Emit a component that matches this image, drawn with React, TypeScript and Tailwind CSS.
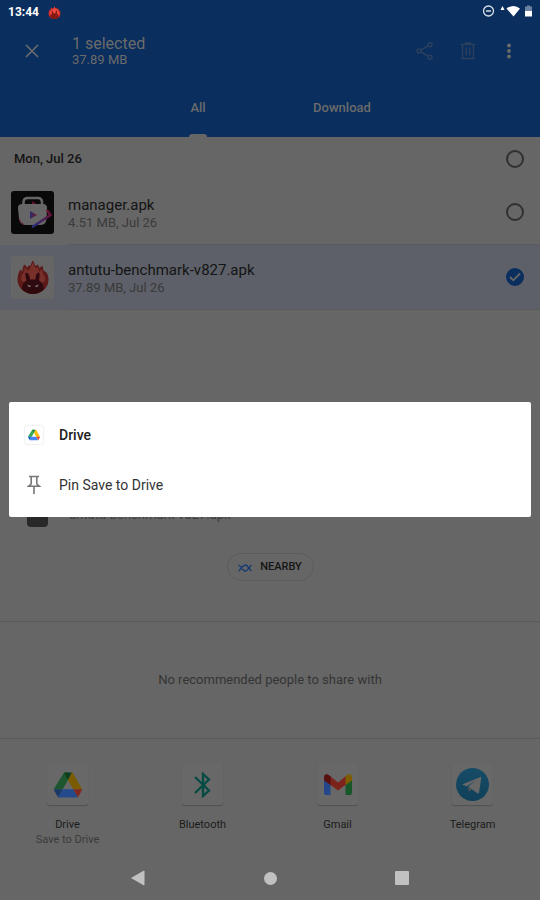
import type { ReactNode } from "react";

function AntutuIcon({ size, bright = false }: { size: number; bright?: boolean }) {
  const flame = bright ? "#d92d27" : "#5c1a19";
  const flameLight = bright ? "#ee4a40" : "#78302a";
  const face = bright ? "#7d1713" : "#2e090d";
  return (
    <svg width={size} height={size} viewBox="0 0 32 34" aria-hidden="true">
      <path
        d="M16 34C7 34 .5 27.500.5 19.500 .5 15.500 1.500 12.500 3.500 9.500L5.500 11.500C5.500 8.500 6 6 7.500 4.500L10.500 7.500 12 5 13.500 6.500C13.800 4 14.500 2 16 .5L18.500 6 21 4.500 22.500 8 25.500 5.500 26.500 10.500 29.500 12.500C31 15 31.500 17 31.500 19.500 31.500 27.500 25 34 16 34Z"
        fill={flame}
      />
      <path
        d="M4 20C4 16 5.500 14 7 12L8 7 11 11 13.500 8 16 2.500 18.500 8.500 20.500 7 22.500 12 25 9 26 14C28 16 28.500 18 28 21L22 25H10Z"
        fill={flameLight}
      />
      <path
        d="M8.500 13C10.500 11.800 12.500 14 13 19.500H18.500C18.500 14 20.500 11.800 22.500 13 23 15.500 22.200 18 22 20.500 25 22 26.500 25 27 29 24 32.500 20 34 16 34 12 34 8 32.500 5 29 5 25 6.500 22 9.500 20.500 9.200 18 8 15.500 8.500 13Z"
        fill={face}
      />
      <path d="M10 24.500L14.500 26 12 27.200ZM22 24.500L17.500 26 20 27.200Z" fill={bright ? "#e0342d" : "#777"} />
    </svg>
  );
}

function ManagerIcon() {
  return (
    <svg width="43" height="43" viewBox="0 0 43 43" aria-hidden="true">
      <defs>
        <linearGradient id="ribbon" x1="0" y1="1" x2="1" y2="0">
          <stop offset="0" stopColor="#26317c" />
          <stop offset="0.5" stopColor="#4c1f58" />
          <stop offset="1" stopColor="#72102f" />
        </linearGradient>
        <linearGradient id="play" x1="0" y1="0" x2="1" y2="0">
          <stop offset="0" stopColor="#292e70" />
          <stop offset="1" stopColor="#75152c" />
        </linearGradient>
      </defs>
      <rect width="43" height="43" rx="3" fill="#090909" />
      <path d="M21 10L27 14H21Z" fill="#651229" />
      <path d="M12.500 15V10.500Q13 7 16.500 7H27Q30.500 7 31 10.500V15" fill="none" stroke="#666" strokeWidth="2.500" />
      <path d="M11 13H32Q36 13 36 17L35.500 28Q35 34 29 34H15Q9 34 8 28L7 17Q7 13 11 13Z" fill="#666" />
      <path d="M8 28Q9.500 33 13 33.500" fill="none" stroke="#66152f" />
      <path d="M19 20L26 24 19 28Z" fill="url(#play)" />
      <path d="M36.500 20L39.500 24 22 35.500" fill="none" stroke="url(#ribbon)" strokeWidth="2.500" strokeLinejoin="round" strokeLinecap="round" />
    </svg>
  );
}

function DriveIcon({ size, bright = false }: { size: number; bright?: boolean }) {
  const c = bright
    ? ["#34a853", "#188038", "#fbbc04", "#4285f4", "#1967d2", "#ea4335"]
    : ["#1d5730", "#0c3f1c", "#7b5b00", "#234a8c", "#183967", "#812820"];
  return (
    <svg width={size} height={size} viewBox="0 0 28 26" aria-hidden="true">
      <path d="M9.500 1.500Q10 .5 11 .5H14L14 8 8.700 17.300H0Q0 16.500.5 15.800Z" fill={c[0]} />
      <path d="M10 .5H18L14 8Z" fill={c[1]} />
      <path d="M18 .5Q18.600.5 19 1.200L28 17.300H19.300L14 8Z" fill={c[2]} />
      <path d="M8.700 17.300H19.300L23.800 25Q23.500 25.500 22.500 25.500H5.500Q4.500 25.500 4.200 25Z" fill={c[3]} />
      <path d="M0 17.300H8.700L4.200 25Q3.800 25 3.500 24.300L.4 19Q0 18.300 0 17.300Z" fill={c[4]} />
      <path d="M19.300 17.300H28Q28 18.300 27.600 19L24.500 24.300Q24.200 25 23.800 25Z" fill={c[5]} />
    </svg>
  );
}

function BluetoothIcon() {
  return (
    <svg width="18" height="26" viewBox="0 0 18 26" fill="none" stroke="#064b43" strokeWidth="2.300" aria-hidden="true">
      <path d="M1 5L15 18.500 9 24V2L15 7.500 1 21" />
    </svg>
  );
}

function GmailIcon() {
  return (
    <svg width="28" height="21" viewBox="0 0 28 21" aria-hidden="true">
      <path d="M0 5H6.500V21H2Q0 21 0 19Z" fill="#24468a" />
      <path d="M21.500 5H28V19Q28 21 26 21H21.500Z" fill="#175729" />
      <path d="M6 2L14 8.500 22 2V10.500L14 16.500 6 10.500Z" fill="#7c231c" />
      <path d="M0 3Q0 1 2 .3 3.500 0 5 1L6.500 2.500V11L0 6.500Z" fill="#57100e" />
      <path d="M28 3Q28 1 26 .3 24.500 0 23 1L21.500 2.500V11L28 6.500Z" fill="#7e5c00" />
    </svg>
  );
}

function TelegramIcon() {
  return (
    <svg width="33" height="33" viewBox="0 0 33 33" aria-hidden="true">
      <defs>
        <linearGradient id="telegram" x1="0" y1="0" x2="0" y2="1">
          <stop offset="0" stopColor="#174c66" />
          <stop offset="1" stopColor="#10405a" />
        </linearGradient>
      </defs>
      <circle cx="16.500" cy="16.500" r="16.500" fill="url(#telegram)" />
      <path d="M6 16.500L24.500 9Q25.700 8.700 25.300 10L23 24.500Q22.500 26 21 25L12 18.500 21 12 10.500 18.300Z" fill="#686868" />
      <path d="M12 18.500L13 23.500 16 21.300Z" fill="#555" />
    </svg>
  );
}

function StatusBar() {
  return (
    <div className="flex h-6 items-center px-2 text-white">
      <span className="text-xs font-bold leading-4">13:44</span>
      <span className="ml-2 flex w-4 justify-center">
        <AntutuIcon size={13} bright />
      </span>
      <span className="ml-auto flex items-center">
        <svg width="52" height="14" viewBox="0 0 52 14" aria-label="Do not disturb, Wi-Fi, battery" role="img">
          <circle cx="8.500" cy="6" r="5" fill="none" stroke="#d9dfe8" strokeWidth="1.300" />
          <path d="M6 6H11" stroke="#d9dfe8" strokeWidth="1.500" />
          <path d="M20.500 5L22.500 1 24.500 5Z" fill="#fff" />
          <path d="M26.500 3.500Q33.500-1.500 40 3.500L33.500 11.500Z" fill="#fff" />
          <path d="M45 1.500H47V.5H50V1.500H52V6H45Z" fill="#6c82a0" />
          <path d="M45 6H52V11.500H45Z" fill="#fff" />
        </svg>
      </span>
    </div>
  );
}

function Header() {
  return (
    <header className="bg-[#0a2e5d] text-[#6b6b6b]">
      <StatusBar />
      <div className="flex h-[54px] items-center">
        <button aria-label="Close selection" className="flex w-16 justify-center">
          <svg width="14" height="14" viewBox="0 0 14 14" stroke="currentColor" strokeWidth="1.600" aria-hidden="true">
            <path d="M1 1L13 13M13 1L1 13" />
          </svg>
        </button>
        <div className="flex-1 pl-2 pt-0.5">
          <h1 className="text-base leading-4">1 selected</h1>
          <p className="text-[13px] leading-4">37.89 MB</p>
        </div>
        <button aria-label="Share" className="flex w-[43px] justify-center text-[#2b405d]">
          <svg width="18" height="18" viewBox="0 0 18 18" fill="none" stroke="currentColor" strokeWidth="1.500" aria-hidden="true">
            <circle cx="3" cy="9" r="2" />
            <circle cx="14" cy="2.800" r="2" />
            <circle cx="14" cy="15.200" r="2" />
            <path d="M4.800 8L12.200 3.800M4.800 10L12.200 14.200" />
          </svg>
        </button>
        <button aria-label="Delete" className="flex w-[43px] justify-center text-[#2b405d]">
          <svg width="16" height="18" viewBox="0 0 16 18" fill="none" stroke="currentColor" strokeWidth="1.500" aria-hidden="true">
            <path d="M1 2.500H15M5.500 2V1H10.500V2M2.500 2.500V16.500H13.500V2.500M6.200 5.500V13.500M9.800 5.500V13.500" />
          </svg>
        </button>
        <button aria-label="More options" className="mr-[11px] flex w-10 justify-center">
          <svg width="4" height="16" viewBox="0 0 4 16" fill="currentColor" aria-hidden="true">
            <circle cx="2" cy="2.500" r="1.900" />
            <circle cx="2" cy="8" r="1.900" />
            <circle cx="2" cy="13.500" r="1.900" />
          </svg>
        </button>
      </div>
      <nav className="flex h-[59px] justify-center text-[13px] font-medium">
        <button className="flex w-36 flex-col items-center justify-between">
          <span className="pt-5 leading-5">All</span>
          <span className="h-[3px] w-[18px] rounded-t-sm bg-[#666]" />
        </button>
        <button className="flex w-36 flex-col items-center">
          <span className="pt-5 leading-5">Download</span>
        </button>
      </nav>
    </header>
  );
}

function Tick({ label, checked = false }: { label: string; checked?: boolean }) {
  return (
    <label className="mr-4 grid place-items-center">
      <input
        type="checkbox"
        aria-label={label}
        defaultChecked={checked}
        className="peer col-start-1 row-start-1 size-[18px] appearance-none rounded-full border-2 border-[#303030] checked:border-[#0a2e5d] checked:bg-[#0a2e5d]"
      />
      <svg
        width="12"
        height="10"
        viewBox="0 0 12 10"
        fill="none"
        stroke="#666"
        strokeWidth="1.800"
        aria-hidden="true"
        className="pointer-events-none invisible col-start-1 row-start-1 peer-checked:visible"
      >
        <path d="M1 5L4.300 8.300 11 1.500" />
      </svg>
    </label>
  );
}

function FileRow({ icon, name, detail, selected = false }: { icon: ReactNode; name: string; detail: string; selected?: boolean }) {
  return (
    <li className={selected ? "bg-[#5d6068]" : ""}>
      <div className="flex h-16 items-center">
        <span className="ml-[11px] flex w-[57px]">{icon}</span>
        <div className="flex-1 pt-0.5">
          <p className="text-[15px] leading-5 text-[#141414]">{name}</p>
          <p className="text-[13px] leading-4 text-[#3a3a3a]">{detail}</p>
        </div>
        <Tick label={name} checked={selected} />
      </div>
      <div className="ml-[68px] h-px bg-[#5b5b5d]" />
    </li>
  );
}

function ShareTarget({ icon, name, detail }: { icon: ReactNode; name: string; detail?: string }) {
  return (
    <button className="flex flex-col items-center text-[11px]">
      <span className="flex size-[41px] items-center justify-center rounded-[3px] bg-[#686868] shadow-[0_1px_1px_#505050]">{icon}</span>
      <span className="mt-3 leading-4 text-[#1b1b1b]">{name}</span>
      {detail && <span className="leading-[14px] text-[#3b3b3b]">{detail}</span>}
    </button>
  );
}

function ShareSheet() {
  return (
    <section aria-label="Share" className="pt-[195px]">
      <div className="flex h-[22px] items-end">
        <span className="ml-[27px] h-[22px] w-[21px] rounded-sm bg-[#282828]" />
        <span className="ml-[21px] self-start text-[13px] leading-5 text-[#3f3f3f]">antutu-benchmark-v827.apk</span>
      </div>
      <div className="flex h-[94px] justify-center pt-[26px]">
        <button className="flex h-7 w-[87px] items-center justify-center gap-2 rounded-full border border-[#5c5c5c] pt-px text-[11px] font-medium text-[#151515]">
          <svg width="14" height="8" viewBox="0 0 14 8" fill="none" stroke="#183d73" strokeWidth="1.500" aria-hidden="true">
            <path d="M.5 1L3 3M.5 7C3 5.500 4.500 1 7.500 1 9.500 1 11 4.500 13.500 7M4 5C5 6 6 7 7.500 7 9.500 7 11 3.500 13.500 1" />
          </svg>
          NEARBY
        </button>
      </div>
      <p className="flex h-[118px] items-center justify-center border-y border-[#5a5a5a] text-[13px] text-[#343434]">
        No recommended people to share with
      </p>
      <div className="grid grid-cols-4 items-start pt-[25px]">
        <ShareTarget icon={<DriveIcon size={28} />} name="Drive" detail="Save to Drive" />
        <ShareTarget icon={<BluetoothIcon />} name="Bluetooth" />
        <ShareTarget icon={<GmailIcon />} name="Gmail" />
        <ShareTarget icon={<TelegramIcon />} name="Telegram" />
      </div>
    </section>
  );
}

function NavigationBar() {
  return (
    <nav className="mt-auto flex h-11 items-center justify-center text-[#c1c1c1]">
      <button aria-label="Back" className="flex w-[132px] justify-center">
        <svg width="14" height="16" viewBox="0 0 14 16" fill="currentColor" aria-hidden="true">
          <path d="M0 8L12.500.7Q13.500.5 13.500 1.500V14.500Q13.500 15.500 12.500 15.300Z" />
        </svg>
      </button>
      <button aria-label="Home" className="flex w-[132px] justify-center">
        <span className="size-[13px] rounded-full bg-current" />
      </button>
      <button aria-label="Recent apps" className="flex w-[132px] justify-center">
        <span className="size-[14px] rounded-[1px] bg-current" />
      </button>
    </nav>
  );
}

function DriveDialog() {
  return (
    <div
      role="dialog"
      aria-label="Drive"
      className="absolute inset-x-[9px] top-[402px] rounded-xs bg-white pb-[7px] pt-2 text-sm text-[#333]"
    >
      <h2 className="flex h-[50px] items-center font-medium text-[#202020]">
        <span className="ml-4 mr-4 flex size-[18px] items-center justify-center rounded-xs shadow-[0_0_2px_#ccc]">
          <DriveIcon size={12} bright />
        </span>
        Drive
      </h2>
      <button className="flex h-[50px] w-full items-center">
        <span className="ml-4 mr-4 flex w-[18px] justify-center">
          <svg width="14" height="20" viewBox="0 0 14 20" fill="none" stroke="#777" strokeWidth="1.600" aria-hidden="true">
            <path d="M2 1.500H12M4.200 1.500V9L1.500 11.300H12.500L9.800 9V1.500M7 11V19" />
          </svg>
        </span>
        Pin Save to Drive
      </button>
    </div>
  );
}

export default function App() {
  return (
    <div className="relative flex min-h-screen flex-col bg-[#666] font-[Roboto,sans-serif]">
      <Header />
      <main>
        <h2 className="flex h-[43px] items-center justify-between pl-[14px] text-[13px] font-medium text-[#141414]">
          Mon, Jul 26
          <Tick label="Mon, Jul 26" />
        </h2>
        <ul>
          <FileRow icon={<ManagerIcon />} name="manager.apk" detail="4.51 MB, Jul 26" />
          <FileRow
            icon={
              <span className="flex size-[43px] items-center justify-center rounded-[3px] bg-[#666]">
                <AntutuIcon size={34} />
              </span>
            }
            name="antutu-benchmark-v827.apk"
            detail="37.89 MB, Jul 26"
            selected
          />
        </ul>
      </main>
      <ShareSheet />
      <NavigationBar />
      <DriveDialog />
    </div>
  );
}
